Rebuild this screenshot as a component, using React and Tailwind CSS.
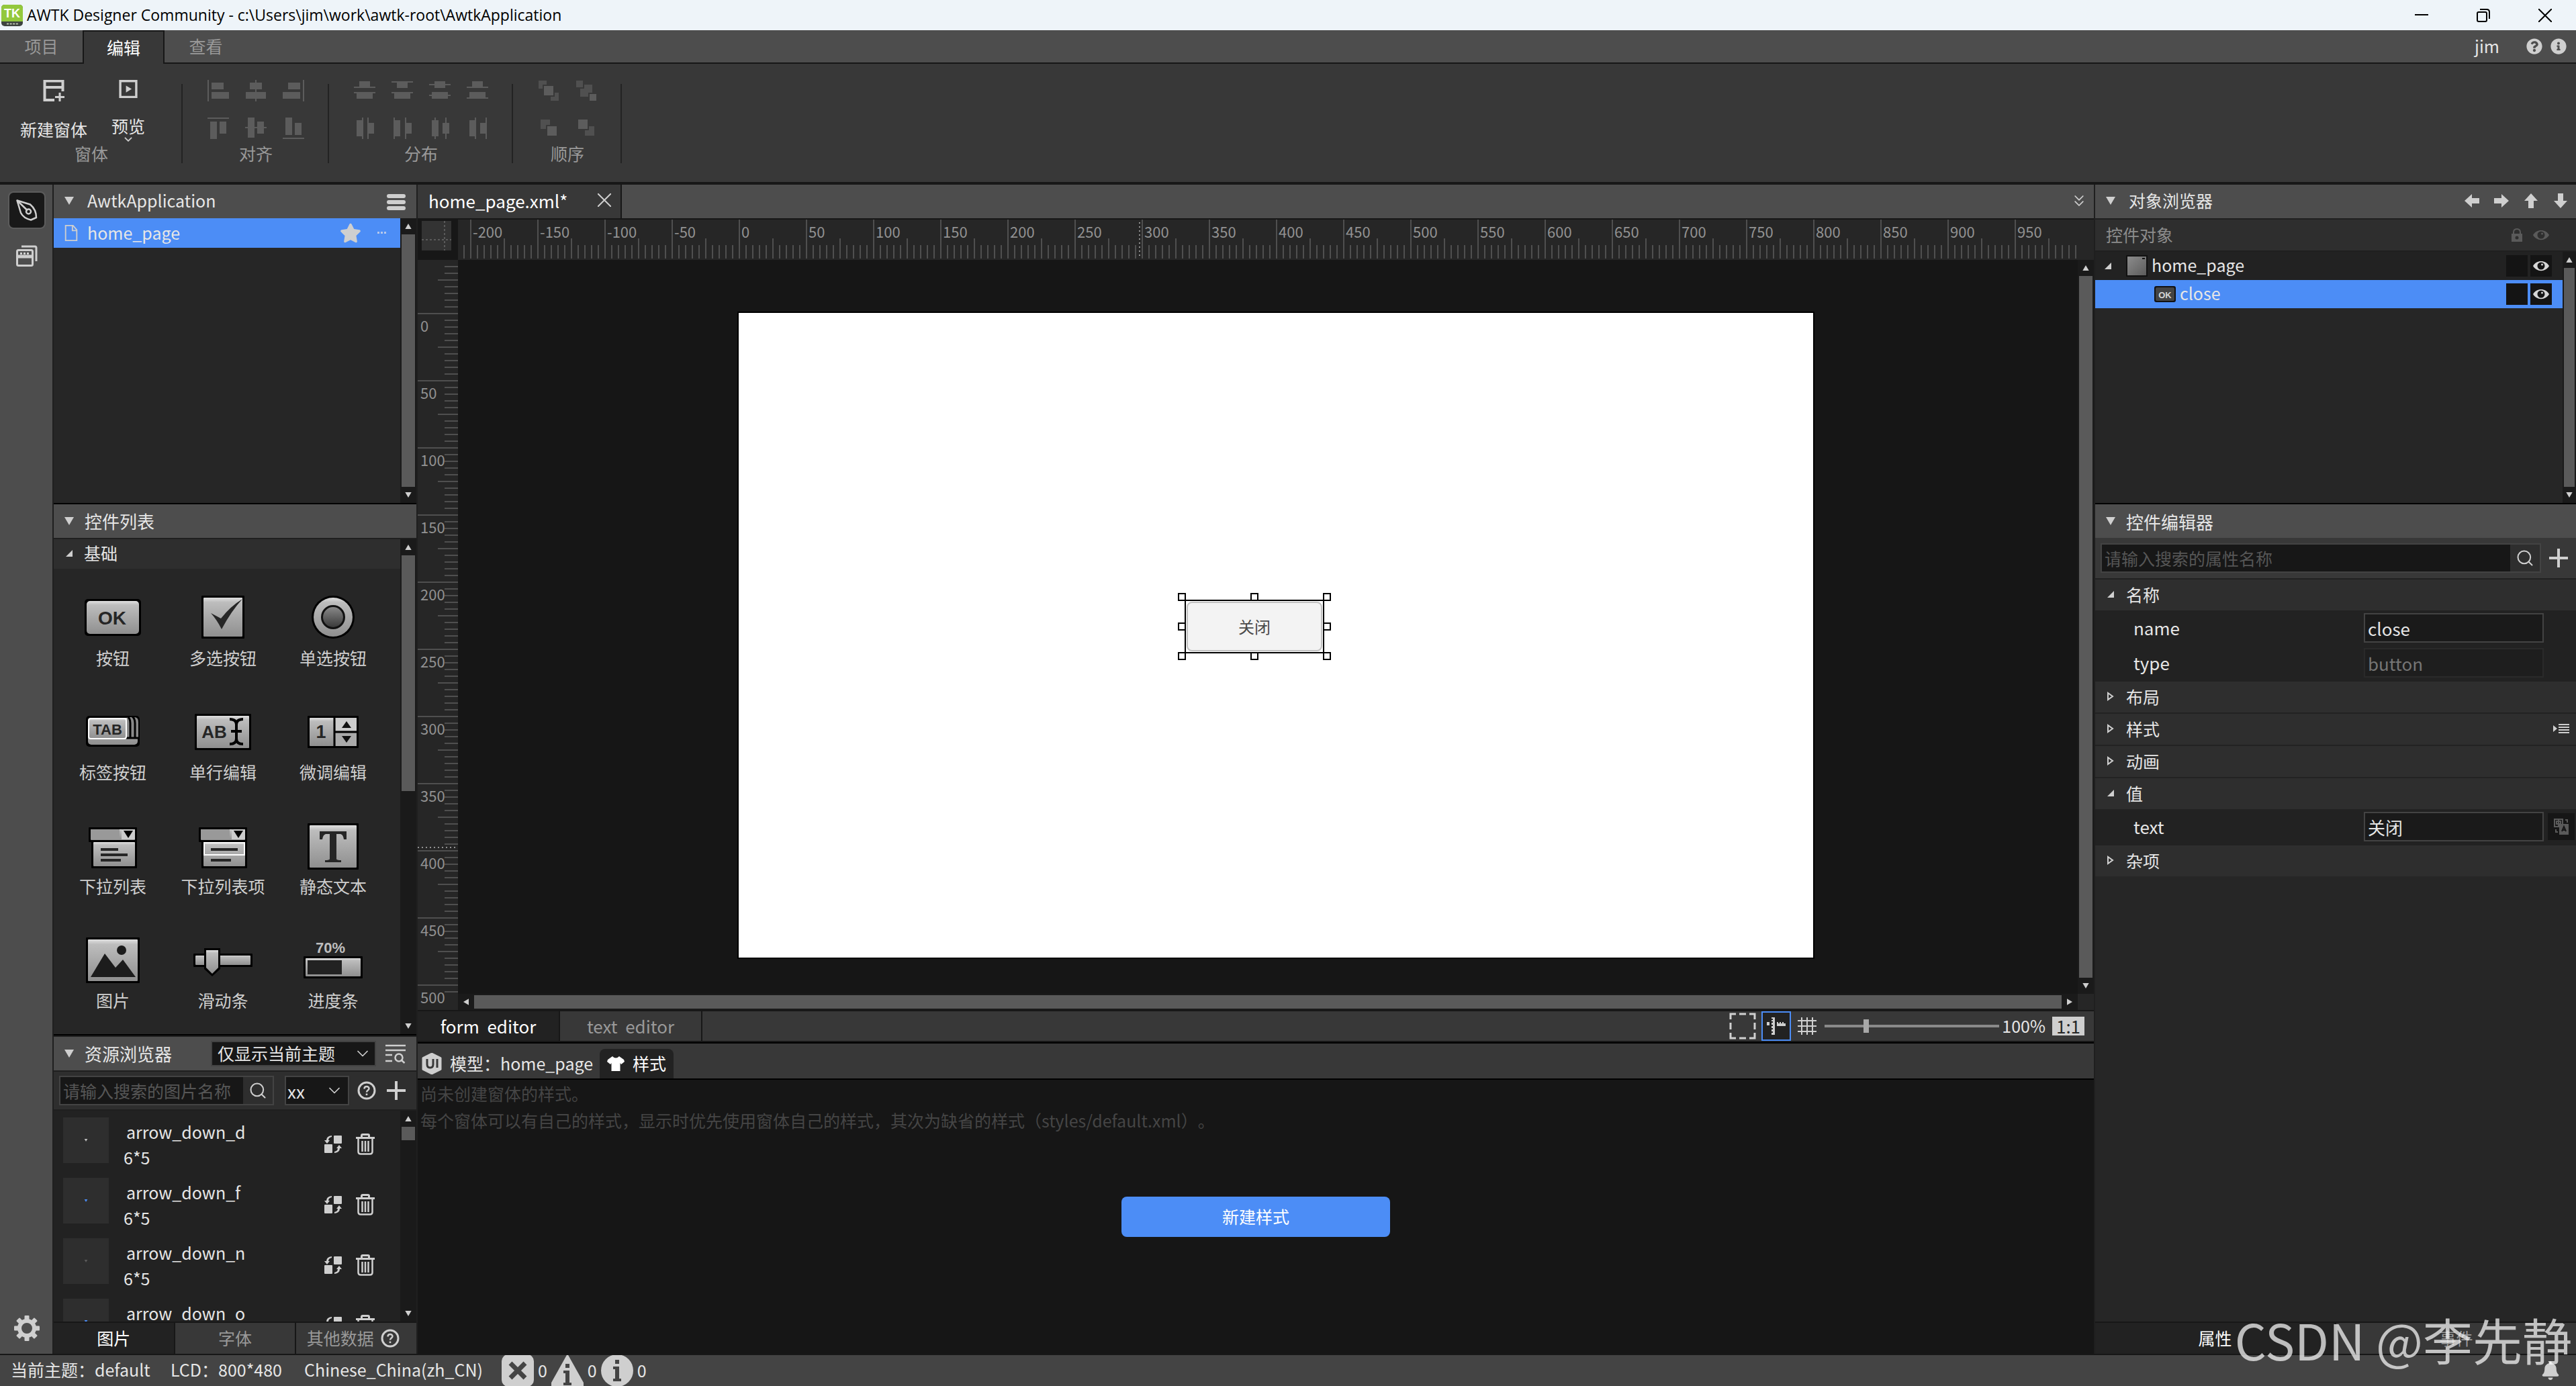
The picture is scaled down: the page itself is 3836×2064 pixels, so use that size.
import React, { useState } from 'react';
import { FaStar, FaBell, FaInfoCircle, FaQuestionCircle } from 'react-icons/fa';
import { Search, ChevronDown, ChevronsDown } from 'lucide-react';

const menuTabs = ['项目', '编辑', '查看'];

// every shape is [x, y, width, height] on a 32px grid
const alignIcons = [
  { label: '左对齐', shapes: [[0, 0, 2, 32], [6, 4, 18, 10], [6, 18, 26, 10]] },
  { label: '水平居中', shapes: [[15, 0, 2, 32], [7, 4, 18, 10], [1, 18, 30, 10]] },
  { label: '右对齐', shapes: [[30, 0, 2, 32], [8, 4, 18, 10], [0, 18, 26, 10]] },
  { label: '顶对齐', shapes: [[0, 0, 32, 2], [4, 6, 10, 26], [18, 6, 10, 18]] },
  { label: '垂直居中', shapes: [[0, 14, 32, 2], [4, 0, 10, 30], [18, 6, 10, 18]] },
  { label: '底对齐', shapes: [[0, 30, 32, 2], [4, 0, 10, 26], [18, 8, 10, 18]] },
];

const distributeIcons = [
  { label: '按底分布', shapes: [[8, 2, 16, 8], [0, 10, 32, 2], [0, 18, 32, 2], [4, 20, 24, 8]] },
  { label: '按顶分布', shapes: [[0, 2, 32, 2], [8, 4, 16, 8], [0, 18, 32, 2], [4, 20, 24, 8]] },
  { label: '垂直居中分布', shapes: [[8, 2, 16, 10], [0, 6, 32, 2], [4, 18, 24, 10], [0, 22, 32, 2]] },
  { label: '垂直分布', shapes: [[8, 2, 16, 8], [0, 10, 32, 2], [4, 18, 24, 8], [0, 26, 32, 2]] },
  { label: '按右分布', shapes: [[4, 4, 8, 24], [12, 0, 2, 32], [20, 0, 2, 32], [22, 8, 8, 16]] },
  { label: '按左分布', shapes: [[3, 0, 2, 32], [5, 4, 8, 24], [20, 0, 2, 32], [22, 8, 8, 16]] },
  { label: '水平居中分布', shapes: [[4, 4, 10, 24], [8, 0, 2, 32], [20, 8, 10, 16], [24, 0, 2, 32]] },
  { label: '水平分布', shapes: [[4, 4, 8, 24], [12, 0, 2, 32], [20, 8, 8, 16], [28, 0, 2, 32]] },
];

const orderIcons = [
  { label: '置顶', shapes: [[0, 0, 14, 14], [18, 18, 14, 14], [8, 8, 16, 16]] },
  { label: '置底', shapes: [[6, 6, 20, 20], [0, 0, 12, 12], [20, 20, 12, 12]] },
  { label: '上移', shapes: [[3, 2, 16, 16], [13, 12, 16, 16]] },
  { label: '下移', shapes: [[13, 12, 16, 16], [3, 2, 16, 16]] },
];

const resources = [
  { name: 'arrow_down_d', size: '6*5', color: 'text-[#bdbdbd]' },
  { name: 'arrow_down_f', size: '6*5', color: 'text-[#4c8df6]' },
  { name: 'arrow_down_n', size: '6*5', color: 'text-[#5a5a5a]' },
  { name: 'arrow_down_o', size: '6*5', color: 'text-[#4c8df6]' },
];

function Triangle({ className = '' }) {
  return (
    <svg viewBox="0 0 14 12" className={`shrink-0 ${className}`} fill="currentColor">
      <path d="M0 0H14L7 12Z" />
    </svg>
  );
}

function OpenMark() {
  return (
    <svg viewBox="0 0 10 10" className="w-2.5 h-2.5 shrink-0" fill="#cfcfcf">
      <path d="M10 0V10H0Z" />
    </svg>
  );
}

function ClosedMark() {
  return (
    <svg viewBox="0 0 10 14" className="w-2.5 h-3.5 shrink-0" fill="none" stroke="#cfcfcf" strokeWidth="2">
      <path d="M1 2V12L8 7Z" />
    </svg>
  );
}

function Plus() {
  return (
    <svg viewBox="0 0 28 28" className="w-7 h-7" fill="#cfcfcf">
      <path d="M12 0H16V12H28V16H16V28H12V16H0V12H12Z" />
    </svg>
  );
}

function Cross({ color }) {
  return (
    <svg viewBox="0 0 20 20" className="w-5 h-5" stroke={color} strokeWidth="2">
      <path d="M0 0L20 20M20 0L0 20" />
    </svg>
  );
}

function HelpRing() {
  return (
    <svg viewBox="0 0 28 28" className="w-7 h-7 shrink-0">
      <circle cx="14" cy="14" r="12" fill="none" stroke="#cfcfcf" strokeWidth="3" />
      <path d="M10.500 11.500C10.500 7 17.500 7 17.500 11C17.500 13.500 14 13.500 14 16.500" fill="none" stroke="#cfcfcf" strokeWidth="2.500" />
      <rect x="12.700" y="18.500" width="2.600" height="2.600" fill="#cfcfcf" />
    </svg>
  );
}

function Eye({ className }) {
  return (
    <svg viewBox="0 0 24 16" className={`w-6 h-4 ${className}`} fill="currentColor">
      <path fillRule="evenodd" d="M0 8C5 -1.500 19 -1.500 24 8C19 17.500 5 17.500 0 8ZM12 2.500A5.500 5.500 0 1 0 12 13.500A5.500 5.500 0 1 0 12 2.500Z" />
      <circle cx="13.500" cy="6" r="1.500" />
    </svg>
  );
}

function ArrowIcon({ className = '' }) {
  return (
    <svg viewBox="0 0 22 22" className={`w-[22px] h-[22px] ${className}`} fill="#cfcfcf">
      <path d="M0 11L11 1V7H22V15H11V21Z" />
    </svg>
  );
}

function VScroll({ className = '', thumb = 'flex-1' }) {
  return (
    <div className={`w-6 shrink-0 bg-[#1a1a1a] flex flex-col items-center ${className}`}>
      <div className="h-6 flex items-center">
        <Triangle className="w-2.5 h-2 text-[#cfcfcf] rotate-180" />
      </div>
      <div className="flex-1 min-h-0 self-stretch flex flex-col px-0.5">
        <div className={`bg-[#5a5a5a] ${thumb}`} />
      </div>
      <div className="h-6 flex items-center">
        <Triangle className="w-2.5 h-2 text-[#cfcfcf]" />
      </div>
    </div>
  );
}

function PanelHeader({ title, children, className = 'gap-4 text-[26px]' }) {
  return (
    <div className={`h-[50px] shrink-0 bg-[#4d4d4d] flex items-center px-4 ${className}`}>
      <Triangle className="w-3.5 h-3 text-[#cfcfcf]" />
      <h2 className="mr-auto whitespace-nowrap">{title}</h2>
      {children}
    </div>
  );
}

function TitleBar() {
  return (
    <header className="h-[45px] shrink-0 bg-[#eef4f9] text-black flex items-center pl-0.5">
      <svg viewBox="0 0 32 32" className="w-8 h-8 shrink-0">
        <rect width="32" height="32" rx="5" fill="#3d4340" />
        <path d="M0 5Q0 0 5 0H27Q32 0 32 5V25H0Z" fill="#93c83d" />
        <text x="16" y="19" textAnchor="middle" fontFamily="Liberation Sans" fontSize="18" fontWeight="bold" fill="#fff">TK</text>
        <path d="M8 28.500H25" stroke="#b9c4b0" strokeWidth="2" strokeDasharray="3 1.600" />
      </svg>
      <h1 className="ml-1.5 font-['Open_Sans','Noto_Sans',sans-serif] text-[23px] mr-auto whitespace-nowrap">
        AWTK Designer Community - c:\Users\jim\work\awtk-root\AwtkApplication
      </h1>
      <button aria-label="最小化" className="w-[92px] h-full flex items-center justify-center">
        <svg viewBox="0 0 20 20" className="w-5 h-5" stroke="#000" strokeWidth="2"><path d="M0 9H20" /></svg>
      </button>
      <button aria-label="还原" className="w-[92px] h-full flex items-center justify-center">
        <svg viewBox="0 0 20 20" className="w-5 h-5" stroke="#000" strokeWidth="2" fill="none">
          <rect x="1" y="5" width="14" height="14" rx="2" />
          <path d="M5 1H15Q19 1 19 5V15" />
        </svg>
      </button>
      <button aria-label="关闭窗口" className="w-[92px] h-full flex items-center justify-center">
        <Cross color="#000" />
      </button>
    </header>
  );
}

function MenuBar({ active, onChange }) {
  return (
    <nav className="h-[50px] shrink-0 bg-[#4d4d4d] flex items-stretch">
      {menuTabs.map((tab) => (
        <button
          key={tab}
          onClick={() => onChange(tab)}
          className={
            active === tab
              ? 'w-[122px] bg-[#383838] text-white border-2 border-b-0 border-[#171717]'
              : 'w-[123px] text-[#999999] border-b-2 border-[#171717]'
          }
        >
          {tab}
        </button>
      ))}
      <div className="flex-1 flex items-center justify-end border-b-2 border-[#171717] pr-3.5">
        <span className="mr-10">jim</span>
        <button aria-label="帮助" className="mr-3"><FaQuestionCircle className="w-6 h-6 text-[#cfcfcf]" /></button>
        <button aria-label="关于"><FaInfoCircle className="w-6 h-6 text-[#cfcfcf]" /></button>
      </div>
    </nav>
  );
}

function ShapeButton({ icon, stacked }) {
  return (
    <button disabled aria-label={icon.label} className="w-8 h-8">
      <svg viewBox="0 0 32 32" className="w-full h-full overflow-visible">
        {icon.shapes.map(([x, y, w, h], i) => (
          <rect
            key={i}
            x={x}
            y={y}
            width={w}
            height={h}
            fill={stacked && i < icon.shapes.length - 1 ? '#505050' : '#5c5c5c'}
            stroke={stacked ? '#383838' : 'none'}
            strokeWidth="2"
          />
        ))}
      </svg>
    </button>
  );
}

function RibbonGroup({ title, children, className }) {
  return (
    <section className={`relative flex flex-col items-center ${className}`}>
      <div className="h-[116px] flex pt-6">{children}</div>
      <div className="text-[#999999] leading-[34px]">{title}</div>
      <span className="absolute right-0 top-[30px] h-[118px] w-0.5 bg-[#232323]" />
    </section>
  );
}

function Ribbon() {
  return (
    <div className="h-[180px] shrink-0 bg-[#383838] border-b-4 border-[#171717] flex">
      <RibbonGroup title="窗体" className="w-[272px]">
        <button className="w-[124px] flex flex-col items-center justify-start">
          <svg viewBox="0 0 32 32" className="w-8 h-8" fill="none" stroke="#cfcfcf" strokeWidth="3">
            <path d="M17 30H2.500V1.500H29.500V17M2.500 11H29.500" strokeWidth="4" />
            <path d="M25 19V32M18 25.500H32" />
          </svg>
          <span className="mt-6 leading-[34px] whitespace-nowrap">新建窗体</span>
        </button>
        <button className="w-[98px] mr-3.5 flex flex-col items-center justify-start">
          <svg viewBox="0 0 32 32" className="w-8 h-8">
            <rect x="2" y="2" width="28" height="28" fill="none" stroke="#cfcfcf" strokeWidth="4" />
            <path d="M12 10L22 16L12 22Z" fill="#cfcfcf" />
          </svg>
          <span className="mt-6 leading-[34px]">预览</span>
          <svg viewBox="0 0 14 8" className="w-3.5 h-2" fill="none" stroke="#cfcfcf" strokeWidth="2">
            <path d="M1 1L7 7L13 1" />
          </svg>
        </button>
      </RibbonGroup>
      <RibbonGroup title="对齐" className="w-[218px]">
        <div className="grid grid-cols-3 gap-6 content-start">
          {alignIcons.map((icon) => <ShapeButton key={icon.label} icon={icon} />)}
        </div>
      </RibbonGroup>
      <RibbonGroup title="分布" className="w-[274px]">
        <div className="grid grid-cols-4 gap-6 content-start">
          {distributeIcons.map((icon) => <ShapeButton key={icon.label} icon={icon} />)}
        </div>
      </RibbonGroup>
      <RibbonGroup title="顺序" className="w-[162px]">
        <div className="grid grid-cols-2 gap-6 content-start">
          {orderIcons.map((icon) => <ShapeButton key={icon.label} icon={icon} stacked />)}
        </div>
      </RibbonGroup>
    </div>
  );
}

function ToolRail() {
  return (
    <aside className="w-20 shrink-0 bg-[#4d4d4d] border-r-2 border-[#1f1f1f] flex flex-col items-center pt-2.5 pb-[18px] pl-0.5">
      <button aria-label="设计" className="w-14 h-14 rounded-lg bg-[#191919] border-2 border-[#5c5c5c] flex items-center justify-center">
        <svg viewBox="0 0 32 32" className="w-8 h-8" fill="none" stroke="#cfcfcf" strokeWidth="2.500" strokeLinejoin="round">
          <path d="M1.500 1.500L21 7.500Q30 15 30 27L22 30.500Q11 28 7 20Z" />
          <path d="M1.500 1.500L17 16.500" />
          <circle cx="18.500" cy="18" r="3.500" />
        </svg>
      </button>
      <button aria-label="窗体列表" className="mt-6">
        <svg viewBox="0 0 32 32" className="w-8 h-8" fill="none" stroke="#cfcfcf" strokeWidth="3">
          <rect x="1.500" y="7.500" width="23" height="23" rx="2" />
          <path d="M2 17H24" strokeWidth="5" />
          <path d="M6 12.500H20" strokeDasharray="3 2" />
          <path d="M8 2H28Q30 2 30 4V24" />
        </svg>
      </button>
      <button aria-label="设置" className="mt-auto">
        <svg viewBox="0 0 40 40" className="w-10 h-10" fill="#cfcfcf">
          {[0, 45, 90, 135, 180, 225, 270, 315].map((deg) => (
            <rect key={deg} x="16.500" y="1" width="7" height="9" rx="1" transform={`rotate(${deg} 20 20)`} />
          ))}
          <circle cx="20" cy="20" r="11" fill="none" stroke="#cfcfcf" strokeWidth="6" />
        </svg>
      </button>
    </aside>
  );
}

function ProjectPanel() {
  return (
    <section className="flex-[3] min-h-0 flex flex-col border-b-2 border-black">
      <PanelHeader title="AwtkApplication" className="gap-5 pb-0.5">
        <button aria-label="菜单" className="flex flex-col gap-[3px] pt-1">
          <span className="w-7 h-1.5 rounded-full bg-[#cfcfcf]" />
          <span className="w-7 h-1.5 rounded-full bg-[#cfcfcf]" />
          <span className="w-7 h-1.5 rounded-full bg-[#cfcfcf]" />
        </button>
      </PanelHeader>
      <div className="flex-1 min-h-0 flex bg-[#262626]">
        <ul className="flex-1">
          <li className="h-11 bg-[#4c8df6] flex items-center pl-4 pr-5">
            <svg viewBox="0 0 20 26" className="w-5 h-6" fill="none" stroke="#cfcfcf" strokeWidth="2">
              <path d="M1 1H13L19 8V25H1Z" />
              <path d="M12 1V9H19" />
            </svg>
            <span className="ml-3.5 mr-auto">home_page</span>
            <FaStar className="w-8 h-8 text-[#cfcfcf]" />
            <svg viewBox="0 0 14 4" className="w-3.5 h-1 ml-6" fill="#b5c8ec">
              <path d="M0 0H3V3H0ZM5 0H8V3H5ZM10 0H13V3H10Z" />
            </svg>
          </li>
        </ul>
        <VScroll />
      </div>
    </section>
  );
}

function Plate({ x, y, w, h, r = 1 }) {
  return (
    <>
      <rect x={x} y={y} width={w} height={h} rx={r} fill="#000" />
      <rect x={x + 3} y={y + 3} width={w - 6} height={h - 6} rx={r} fill="url(#plate)" />
    </>
  );
}

function IconText({ x, y, size, fill = '#262626', children }) {
  return (
    <text x={x} y={y} textAnchor="middle" fontFamily="Liberation Sans" fontWeight="bold" fontSize={size} fill={fill}>
      {children}
    </text>
  );
}

const widgets = [
  {
    name: '按钮',
    icon: (
      <>
        <Plate x={3} y={9} w={84} h={55} r={5} />
        <IconText x={44} y={47} size={28}>OK</IconText>
      </>
    ),
  },
  {
    name: '多选按钮',
    icon: (
      <>
        <Plate x={13} y={4} w={64} h={64} />
        <path d="M27 30L42 38Q56 20 74 9Q58 26 43 54Q36 40 27 30Z" fill="#262626" />
      </>
    ),
  },
  {
    name: '单选按钮',
    icon: (
      <>
        <circle cx="45" cy="36" r="32" fill="#000" />
        <circle cx="45" cy="36" r="29" fill="url(#plate)" />
        <circle cx="45" cy="36" r="18" fill="#111" />
        <circle cx="45" cy="36" r="15" fill="url(#knob)" />
      </>
    ),
  },
  {
    name: '标签按钮',
    icon: (
      <>
        <Plate x={5} y={13} w={80} h={46} r={5} />
        <path d="M66 15H77Q83 15 83 22V45H66Z" fill="#8a8a8a" />
        <path d="M67 14Q71 17 71 24V46M74 14Q78 17 78 24V46M65 46H84" fill="none" stroke="#000" strokeWidth="3" />
        <rect x="9" y="17" width="56" height="30" rx="3" fill="url(#plate)" stroke="#fff" strokeWidth="2" />
        <IconText x={37} y={41} size={22}>TAB</IconText>
      </>
    ),
  },
  {
    name: '单行编辑',
    icon: (
      <>
        <Plate x={3} y={10} w={84} h={54} />
        <IconText x={32} y={46} size={26}>AB</IconText>
        <path d="M55 18Q65 18 65 26V47Q65 55 55 55M75 18Q65 18 65 26M65 47Q65 55 75 55M57 36H73" fill="none" stroke="#000" strokeWidth="4" />
      </>
    ),
  },
  {
    name: '微调编辑',
    icon: (
      <>
        <Plate x={7} y={13} w={76} h={48} />
        <path d="M47 14V60M47 37H82" stroke="#000" strokeWidth="3" />
        <rect x="49" y="16" width="31" height="19" fill="#ccc" />
        <rect x="49" y="39" width="31" height="19" fill="#aaa" />
        <path d="M58 31L65 21L72 31ZM58 43L65 53L72 43Z" fill="#111" />
        <IconText x={27} y={46} size={27}>1</IconText>
      </>
    ),
  },
  {
    name: '下拉列表',
    icon: (
      <>
        <Plate x={9} y={9} w={72} h={22} />
        <Plate x={13} y={28} w={68} h={42} />
        <rect x="12" y="12" width="43" height="15" fill="#999" />
        <rect x="58" y="12" width="20" height="15" fill="#ccc" />
        <path d="M61 14H75L68 25Z" fill="#000" />
        <path d="M27 42H53M27 50H67M27 58H57" stroke="#262626" strokeWidth="4" />
      </>
    ),
  },
  {
    name: '下拉列表项',
    icon: (
      <>
        <Plate x={9} y={9} w={72} h={22} />
        <Plate x={13} y={28} w={68} h={42} />
        <rect x="12" y="12" width="43" height="15" fill="#999" />
        <rect x="58" y="12" width="20" height="15" fill="#ccc" />
        <path d="M61 14H75L68 25Z" fill="#000" />
        <rect x="17" y="32" width="60" height="18" fill="none" stroke="#fff" strokeWidth="2" />
        <path d="M27 42H67M27 58H57" stroke="#262626" strokeWidth="4" />
      </>
    ),
  },
  {
    name: '静态文本',
    icon: (
      <>
        <Plate x={7} y={3} w={76} h={69} />
        <path d="M25 15H65V27H61Q60 20 56 19H50V56Q50 58 57 58V61H33V58Q40 58 40 56V19H34Q30 20 29 27H25Z" fill="#262626" />
      </>
    ),
  },
  {
    name: '图片',
    icon: (
      <>
        <Plate x={5} y={3} w={80} h={68} />
        <path d="M12 62L33 27L49 48L60 36L79 62Z" fill="#1c1c1c" />
        <circle cx="58" cy="22" r="7" fill="#1c1c1c" />
      </>
    ),
  },
  {
    name: '滑动条',
    icon: (
      <>
        <Plate x={1} y={27} w={88} h={20} />
        <path d="M17 19H41V50L29 61L17 50Z" fill="#000" />
        <path d="M20 22H38V48L29 57L20 48Z" fill="url(#plate)" />
      </>
    ),
  },
  {
    name: '进度条',
    icon: (
      <>
        <IconText x={41} y={26} size={22} fill="#bdbdbd">70%</IconText>
        <Plate x={1} y={31} w={88} h={33} />
        <rect x="7" y="37" width="51" height="21" fill="#222" />
      </>
    ),
  },
];

function WidgetPanel() {
  return (
    <section className="flex-[5] min-h-0 flex flex-col border-b-2 border-black">
      <PanelHeader title="控件列表" />
      <div className="flex-1 min-h-0 flex bg-[#262626] border-t-2 border-[#1f1f1f]">
        <div className="flex-1 overflow-hidden">
          <h3 className="h-11 bg-[#2e2e2e] flex items-center gap-[17px] px-[18px] pb-0.5">
            <OpenMark />
            基础
          </h3>
          <div className="grid grid-cols-3 pl-1.5 pr-[18px]">
            {widgets.map((widget) => (
              <button key={widget.name} className="h-[170px] pt-9 flex flex-col items-center justify-start">
                <svg viewBox="0 0 90 72" className="w-[90px] h-[72px]">{widget.icon}</svg>
                <span className="mt-1.5 leading-9 whitespace-nowrap text-[#cfcfcf]">{widget.name}</span>
              </button>
            ))}
          </div>
        </div>
        <VScroll thumb="h-[51%]" />
      </div>
    </section>
  );
}

function ResourceRow({ item }) {
  return (
    <li className="h-[90px] flex items-start pl-3.5 pt-2.5">
      <div className="w-[68px] h-[68px] bg-[#2e2e2e] flex items-center justify-center">
        <Triangle className={`w-1.5 h-1 ${item.color}`} />
      </div>
      <div className="ml-[22px] mr-auto mt-0.5 leading-[38px]">
        <div className="pl-1">{item.name}</div>
        <div>{item.size}</div>
      </div>
      <button aria-label={`替换 ${item.name}`} className="mt-[26px]">
        <svg viewBox="0 0 28 28" className="w-7 h-7" fill="#cfcfcf">
          <rect x="15" y="1" width="12" height="12" rx="1" />
          <rect x="1" y="14" width="12" height="13" rx="1" />
          <path d="M12 1Q4 2 4 8H1L5 13L9 8H7Q7 4 12 3ZM16 27Q24 26 24 20H27L23 15L19 20H21Q21 24 16 25Z" />
        </svg>
      </button>
      <button aria-label={`删除 ${item.name}`} className="mt-6 ml-5 mr-[38px]">
        <svg viewBox="0 0 28 32" className="w-7 h-8" fill="none" stroke="#cfcfcf" strokeWidth="3">
          <path d="M0 6.500H28M8.500 6V3Q8.500 1.500 10 1.500H18Q19.500 1.500 19.500 3V6" />
          <path d="M3.500 7V27Q3.500 30.500 7 30.500H21Q24.500 30.500 24.500 27V7M9.500 11V27M14 11V27M18.500 11V27" strokeWidth="2.500" />
        </svg>
      </button>
    </li>
  );
}

function ResourcePanel() {
  const [keyword, setKeyword] = useState('');

  return (
    <section className="flex-[3] min-h-0 flex flex-col">
      <div className="h-[50px] shrink-0 bg-[#4d4d4d] flex items-center pl-4 pr-4 mt-0.5">
        <Triangle className="w-3.5 h-3 text-[#cfcfcf]" />
        <h2 className="ml-4 mr-auto text-[26px] pb-0.5">资源浏览器</h2>
        <div className="grid items-center w-[246px]">
          <select aria-label="主题过滤" className="[grid-area:1/1] h-[38px] w-full appearance-none bg-[#171717] border-2 border-[#434343] pl-2 pb-0.5 leading-8">
            <option>仅显示当前主题</option>
          </select>
          <ChevronDown className="[grid-area:1/1] w-7 h-7 justify-self-end mr-1.5 pointer-events-none text-[#cfcfcf]" strokeWidth={1.5} />
        </div>
        <button aria-label="筛选" className="ml-3.5">
          <svg viewBox="0 0 30 30" className="w-[30px] h-[30px]" fill="none" stroke="#cfcfcf" strokeWidth="2.500">
            <path d="M0 3H30M0 10H30M0 17H10M0 26H10" />
            <circle cx="20" cy="21" r="5.500" />
            <path d="M24 25L28.500 29" />
          </svg>
        </button>
      </div>
      <div className="h-[60px] shrink-0 bg-[#2e2e2e] border-y-2 border-[#1f1f1f] flex items-center pl-2 pr-4">
        <div className="flex h-11 w-80 border-2 border-[#434343]">
          <input
            aria-label="搜索图片"
            value={keyword}
            onChange={(e) => setKeyword(e.target.value)}
            placeholder="请输入搜索的图片名称"
            className="flex-1 min-w-0 bg-[#171717] pl-1 outline-none placeholder:text-[#565656]"
          />
          <button aria-label="搜索" className="w-11 flex items-center justify-center">
            <Search className="w-7 h-7 text-[#cfcfcf]" strokeWidth={1.75} />
          </button>
        </div>
        <div className="grid items-center w-24 ml-4">
          <select aria-label="倍率" className="[grid-area:1/1] h-11 w-full appearance-none bg-[#171717] border-2 border-[#434343] pl-0.5 text-[26px]">
            <option>xx</option>
          </select>
          <ChevronDown className="[grid-area:1/1] w-7 h-7 justify-self-end mr-2 pointer-events-none text-[#cfcfcf]" strokeWidth={1.5} />
        </div>
        <button aria-label="帮助" className="ml-auto mr-4"><HelpRing /></button>
        <button aria-label="添加图片"><Plus /></button>
      </div>
      <div className="flex-1 min-h-0 flex bg-[#222222]">
        <ul className="flex-1 overflow-hidden">
          {resources.map((item) => <ResourceRow key={item.name} item={item} />)}
        </ul>
        <VScroll thumb="h-5" />
      </div>
      <div className="h-12 shrink-0 border-t-2 border-[#171717] grid grid-cols-3 gap-0.5 bg-[#171717]">
        <button className="bg-[#222222] text-white">图片</button>
        <button className="bg-[#383838] text-[#999999]">字体</button>
        <button className="bg-[#383838] text-[#999999] flex items-center justify-center gap-2.5 pr-2.5">
          其他数据
          <HelpRing />
        </button>
      </div>
    </section>
  );
}

function range(from, to, step) {
  const list = [];
  for (let v = from; v <= to; v += step) list.push(v);
  return list;
}

// 1 design unit = 2px
function HRuler() {
  return (
    <svg className="flex-1 min-w-0 h-[60px] bg-[#262626]">
      {range(-205, 995, 5).map((v) => {
        const top = v % 50 === 0 ? 0 : v % 25 === 0 ? 28 : 38;
        return <rect key={v} x={418 + v * 2} y={top} width="2" height={58 - top} fill="#4f4f4f" />;
      })}
      {range(-200, 950, 50).map((v) => (
        <text key={v} x={422 + v * 2} y="27" fontSize="22" fill="#929292">{v}</text>
      ))}
      <path d="M1015 4V56" stroke="#929292" strokeWidth="2" strokeDasharray="2 4" />
    </svg>
  );
}

function VRuler() {
  return (
    <svg className="w-[60px] h-full shrink-0 bg-[#262626]">
      {range(-35, 505, 5).map((v) => {
        const left = v % 50 === 0 ? 0 : v % 25 === 0 ? 30 : 40;
        return <rect key={v} x={left} y={79 + v * 2} width={60 - left} height="2" fill="#4f4f4f" />;
      })}
      {range(0, 500, 50).map((v) => (
        <text key={v} x="4" y={107 + v * 2} fontSize="22" fill="#929292">{v}</text>
      ))}
      <path d="M0 875H56" stroke="#929292" strokeWidth="2" strokeDasharray="2 4" />
    </svg>
  );
}

const handles = [
  'left-[-12px] top-[-12px]',
  'left-[96px] top-[-12px]',
  'right-[-12px] top-[-12px]',
  'left-[-12px] top-[32px]',
  'right-[-12px] top-[32px]',
  'left-[-12px] bottom-[-12px]',
  'left-[96px] bottom-[-12px]',
  'right-[-12px] bottom-[-12px]',
];

function Stage() {
  return (
    <div className="flex-1 min-w-0 relative overflow-hidden bg-[#161616]">
      <div className="absolute left-[418px] top-[79px] w-[1600px] h-[960px] bg-white outline-2 outline-black">
        <div className="absolute left-[664px] top-[427px] w-[208px] h-20 border-2 border-black p-px">
          <button className="w-full h-full rounded-lg border-2 border-[#c2c2c2] bg-[#f3f3f3] text-[#4a4a4a] text-[24px]">
            关闭
          </button>
          {handles.map((pos) => (
            <span key={pos} className={`absolute w-3 h-3 border-2 border-black bg-white ${pos}`} />
          ))}
        </div>
      </div>
    </div>
  );
}

function FormEditor() {
  const [zoom, setZoom] = useState(23);

  return (
    <section className="flex-1 min-h-0 flex flex-col">
      <div className="h-[52px] shrink-0 flex bg-[#4d4d4d] border-b-2 border-[#171717]">
        <div className="w-[304px] bg-[#383838] border-r-2 border-[#171717] flex items-center justify-between pl-4 pr-3.5 pb-1 text-white text-[26px]">
          home_page.xml*
          <button aria-label="关闭标签"><Cross color="#cfcfcf" /></button>
        </div>
        <button aria-label="更多标签" className="ml-auto mr-2 pb-0.5">
          <ChevronsDown className="w-7 h-7 text-[#cfcfcf]" strokeWidth={1.5} />
        </button>
      </div>
      <div className="flex shrink-0">
        <div className="w-[60px] h-[60px] bg-[#171717] flex items-center justify-center pr-1 pb-3">
          <svg viewBox="0 0 44 44" className="w-11 h-11 bg-[#333333]" stroke="#5a5a5a" strokeWidth="2" strokeDasharray="3 3">
            <path d="M34 0V44M0 28H44" />
          </svg>
        </div>
        <HRuler />
      </div>
      <div className="flex-1 min-h-0 flex">
        <VRuler />
        <div className="flex-1 min-w-0 flex flex-col">
          <div className="flex-1 min-h-0 flex">
            <Stage />
            <VScroll />
          </div>
          <div className="h-6 shrink-0 flex bg-[#1a1a1a]">
            <div className="w-6 flex items-center justify-center">
              <Triangle className="w-3 h-2 text-[#cfcfcf] rotate-90" />
            </div>
            <div className="flex-1 my-0.5 bg-[#5a5a5a]" />
            <div className="w-6 flex items-center justify-center">
              <Triangle className="w-3 h-2 text-[#cfcfcf] -rotate-90" />
            </div>
            <div className="w-6 bg-[#262626]" />
          </div>
        </div>
      </div>
      <div className="h-12 shrink-0 flex items-stretch bg-[#383838] border-y-2 border-[#171717] text-[26px]">
        <button className="w-[212px] pb-0.5 bg-[#222222] text-white whitespace-pre border-r-2 border-[#171717]">form  editor</button>
        <button className="w-[212px] pb-0.5 text-[#999999] whitespace-pre border-r-2 border-[#171717]">text  editor</button>
        <div className="ml-auto mr-3.5 flex items-center">
          <button aria-label="选择区域">
            <svg viewBox="0 0 40 40" className="w-10 h-10" fill="none" stroke="#cfcfcf" strokeWidth="3">
              <path d="M2 10V2H10M30 2H38V10M38 30V38H30M10 38H2V30M15 2H25M15 38H25M2 15V25M38 15V25" />
            </svg>
          </button>
          <button aria-label="标尺" className="w-11 h-11 ml-2 border-2 border-[#4c8df6] bg-[#222222] flex items-center justify-center">
            <svg viewBox="0 0 28 28" className="w-7 h-7" fill="#cfcfcf">
              <path d="M7 1H12V27H7V24H9V22H7V19H9V17H7V14H9V12H7V9H9V7H7V5H9V3H7Z" />
              <path d="M0 8H4V13H0ZM15 8H17V10H19V8H21V10H23V8H25V10H28V14H15Z" />
            </svg>
          </button>
          <button aria-label="网格" className="ml-2.5">
            <svg viewBox="0 0 28 28" className="w-7 h-7" stroke="#cfcfcf" strokeWidth="2">
              <path d="M6 1V27M14 1V27M22 1V27M0 6H28M0 14H28M0 22H28" />
            </svg>
          </button>
          <input
            type="range"
            aria-label="缩放"
            value={zoom}
            onChange={(e) => setZoom(Number(e.target.value))}
            className="ml-3 w-[260px] h-1 appearance-none bg-[#8a8a8a] [&::-webkit-slider-thumb]:appearance-none [&::-webkit-slider-thumb]:w-2 [&::-webkit-slider-thumb]:h-5 [&::-webkit-slider-thumb]:bg-[#a8a8a8]"
          />
          <span className="ml-1 text-[25px]">100%</span>
          <button className="ml-2.5 w-12 h-7 bg-[#cfcfcf] text-[#262626] leading-7 text-center">1:1</button>
        </div>
      </div>
    </section>
  );
}

function StylePanel() {
  return (
    <section className="h-[464px] shrink-0 flex flex-col border-t-2 border-black bg-[#161616]">
      <div className="h-[54px] shrink-0 flex items-center bg-[#383838] border-b-2 border-black pl-1.5">
        <svg viewBox="0 0 30 32" className="w-[30px] h-8 mt-2">
          <path d="M15 0L29 7V25L15 32L1 25V7Z" fill="#cfcfcf" stroke="#cfcfcf" strokeLinejoin="round" />
          <path d="M8 9V17Q8 22 12.500 22Q17 22 17 17V9M23 9V22" fill="none" stroke="#383838" strokeWidth="3" />
        </svg>
        <span className="ml-3 mt-2">模型：home_page</span>
        <button className="ml-2.5 w-[110px] self-end h-11 rounded-t-lg bg-[#222222] text-white flex items-center justify-center gap-3">
          <svg viewBox="0 0 26 22" className="w-[26px] h-[22px]" fill="#fff">
            <path d="M8 0Q13 5 18 0L25 5L26 8L21 12L19.500 10V22H6.500V10L5 12L0 8L1 5Z" />
          </svg>
          样式
        </button>
      </div>
      <div className="pl-1 text-[#454545] leading-[40px]">
        <p>尚未创建窗体的样式。</p>
        <p>每个窗体可以有自己的样式，显示时优先使用窗体自己的样式，其次为缺省的样式（styles/default.xml）。</p>
      </div>
      <button className="mt-[94px] mx-auto w-[400px] h-[60px] rounded-lg bg-[#4c8df6] text-white">新建样式</button>
    </section>
  );
}

function ObjectRow({ selected, children }) {
  return (
    <li className={`h-[42px] flex items-center ${selected ? 'bg-[#4c8df6]' : 'bg-[#222222]'}`}>
      {children}
      <button aria-label="锁定" className="w-8 h-8 ml-auto bg-[#141414]" />
      <button aria-label="可见" className="w-8 h-8 ml-1 mr-4 bg-[#141414] flex items-center justify-center">
        <Eye className="text-[#d6d6d6]" />
      </button>
    </li>
  );
}

function ObjectPanel() {
  return (
    <section className="flex-[3] min-h-0 flex flex-col border-b-2 border-black">
      <div className="h-[52px] shrink-0 bg-[#4d4d4d] border-b-2 border-[#1f1f1f] flex items-center pl-4 pr-3 pb-0.5 gap-[22px]">
        <Triangle className="w-3.5 h-3 text-[#cfcfcf]" />
        <h2 className="mr-auto -ml-0.5">对象浏览器</h2>
        <button aria-label="左移"><ArrowIcon /></button>
        <button aria-label="右移"><ArrowIcon className="rotate-180" /></button>
        <button aria-label="上移"><ArrowIcon className="rotate-90" /></button>
        <button aria-label="下移"><ArrowIcon className="-rotate-90" /></button>
      </div>
      <div className="h-12 shrink-0 bg-[#2e2e2e] border-b-2 border-[#1f1f1f] flex items-center pl-4 text-[#8c8c8c]">
        <span className="mr-auto">控件对象</span>
        <svg viewBox="0 0 16 20" className="w-4 h-5 mr-4" fill="#5a5a5a">
          <path fillRule="evenodd" d="M0 8H16V20H0ZM8 11.500A2.500 2.500 0 1 0 8 16.500A2.500 2.500 0 1 0 8 11.500Z" />
          <path d="M3 9V6Q3 1 8 1Q13 1 13 6V9" fill="none" stroke="#5a5a5a" strokeWidth="2" />
        </svg>
        <Eye className="mr-10 text-[#5a5a5a]" />
      </div>
      <div className="flex-1 min-h-0 flex bg-[#262626]">
        <ul className="flex-1">
          <ObjectRow>
            <span className="ml-3.5"><OpenMark /></span>
            <svg viewBox="0 0 32 32" className="w-8 h-8 ml-[22px] mr-1.5">
              <rect width="32" height="32" fill="#111" />
              <rect x="2" y="2" width="28" height="28" fill="url(#pane)" />
              <rect x="24" y="4" width="4" height="2" fill="#111" />
            </svg>
            <span className="pb-0.5">home_page</span>
          </ObjectRow>
          <ObjectRow selected>
            <svg viewBox="0 0 32 24" className="w-8 h-6 ml-[88px] mr-1.5">
              <rect width="32" height="24" rx="3" fill="#111" />
              <rect x="2" y="2" width="28" height="20" rx="2" fill="#444" />
              <text x="16" y="18" textAnchor="middle" fontFamily="Liberation Sans" fontSize="13" fontWeight="bold" fill="#d6d6d6">OK</text>
            </svg>
            <span className="pb-0.5">close</span>
          </ObjectRow>
        </ul>
        <VScroll className="!w-5" />
      </div>
    </section>
  );
}

function Section({ title, open, children, action }) {
  return (
    <div>
      <h3 className="h-12 bg-[#2e2e2e] border-t-2 border-[#222222] flex items-center pl-[18px] pr-2.5 pb-0.5">
        {open ? <OpenMark /> : <ClosedMark />}
        <span className="ml-[18px] mr-auto">{title}</span>
        {action}
      </h3>
      {children && <div className="bg-[#222222]">{children}</div>}
    </div>
  );
}

function Field({ id, value, disabled, children }) {
  return (
    <div className="h-[52px] flex items-center text-[26px]">
      <label htmlFor={id} className="w-[400px] pl-[57px] pb-0.5">{id}</label>
      <input
        id={id}
        defaultValue={value}
        disabled={disabled}
        className={`flex-1 min-w-0 h-11 bg-[#1a1a1a] border-2 border-[#434343] pl-1 text-[#e6e6e6] disabled:bg-[#1e1e1e] disabled:border-[#2a2a2a] disabled:text-[#757575] ${children ? 'mr-1.5' : 'mr-12'}`}
      />
      {children}
    </div>
  );
}

function PropertyPanel() {
  return (
    <section className="flex-[8] min-h-0 flex flex-col bg-[#262626]">
      <PanelHeader title="控件编辑器" />
      <div className="h-[60px] shrink-0 bg-[#383838] flex items-center pl-2 pr-3">
        <div className="flex-1 h-11 flex border-2 border-[#434343]">
          <input
            aria-label="搜索属性"
            placeholder="请输入搜索的属性名称"
            className="flex-1 min-w-0 bg-[#171717] pl-1 outline-none placeholder:text-[#565656]"
          />
          <button aria-label="搜索" className="w-11 bg-[#2e2e2e] flex items-center justify-center">
            <Search className="w-7 h-7 text-[#cfcfcf]" strokeWidth={1.75} />
          </button>
        </div>
        <button aria-label="添加属性" className="ml-3"><Plus /></button>
      </div>
      <Section title="名称" open>
        <Field id="name" value="close" />
        <Field id="type" value="button" disabled />
      </Section>
      <Section title="布局" />
      <Section
        title="样式"
        action={
          <button aria-label="样式菜单">
            <svg viewBox="0 0 24 14" className="w-6 h-3.5" fill="#cfcfcf">
              <path d="M0 2L6 7L0 12ZM8 0H24V2H8ZM8 4H24V6H8ZM8 8H24V10H8ZM8 12H24V14H8Z" />
            </svg>
          </button>
        }
      />
      <Section title="动画" />
      <Section title="值" open>
        <Field id="text" value="关闭">
          <button aria-label="翻译" className="w-10 h-10 mr-0.5 bg-[#161616] flex items-center justify-center">
            <svg viewBox="0 0 22 24" className="w-[22px] h-6" fill="none" stroke="#5a5a5a" strokeWidth="2">
              <path d="M1 1H13V12H1ZM4 4H10V8H4ZM7 2V11M17 2H20V6M3 16V20H6" />
              <path d="M9 9H21V23H9Z" fill="#5a5a5a" />
              <path d="M12 19L15 12L18 19M13 17H17" stroke="#161616" />
            </svg>
          </button>
        </Field>
      </Section>
      <Section title="杂项" />
      <div className="mt-auto h-12 shrink-0 border-t-2 border-[#171717] grid grid-cols-2 gap-0.5 bg-[#171717]">
        <button className="bg-[#222222] text-white">属性</button>
        <button className="bg-[#383838] text-[#999999]">事件</button>
      </div>
    </section>
  );
}

function StatusBar() {
  return (
    <footer className="h-12 shrink-0 overflow-hidden bg-[#444444] border-t-2 border-[#171717] flex items-center pl-4 pr-6 whitespace-nowrap">
      <span className="w-[238px] pb-0.5">当前主题：default</span>
      <span className="w-[199px] pb-0.5">LCD：800*480</span>
      <span className="pb-0.5">Chinese_China(zh_CN)</span>
      <span className="ml-7 flex items-center gap-1.5">
        <svg viewBox="0 0 48 48" className="w-12 h-12">
          <rect width="48" height="48" rx="10" fill="#cfcfcf" />
          <path d="M13 13L35 35M35 13L13 35" stroke="#444444" strokeWidth="7" />
        </svg>
        0
      </span>
      <span className="ml-1.5 flex items-center gap-1.5">
        <svg viewBox="0 0 48 48" className="w-12 h-12">
          <path d="M24 -1L48 42V48H0V42Z" fill="#cfcfcf" />
          <path d="M21 14H27V20H21ZM18 24H27V42H30V46H18V42H21V28H18Z" fill="#444444" />
        </svg>
        0
      </span>
      <span className="ml-1.5 flex items-center gap-1.5">
        <svg viewBox="0 0 48 48" className="w-12 h-12">
          <circle cx="24" cy="24" r="24" fill="#cfcfcf" />
          <path d="M21 8H27V14H21ZM18 18H27V36H30V40H18V36H21V22H18Z" fill="#444444" />
        </svg>
        0
      </span>
      <button aria-label="通知" className="ml-auto"><FaBell className="w-7 h-7 text-[#cfcfcf]" /></button>
    </footer>
  );
}

function App() {
  const [menu, setMenu] = useState('编辑');

  return (
    <div className="h-screen flex flex-col overflow-hidden bg-[#1f1f1f] text-[#e6e6e6] text-[25px] font-['Noto_Sans_CJK_SC',sans-serif] [text-spacing-trim:space-all]">
      <svg className="absolute w-0 h-0" aria-hidden="true">
        <defs>
          <linearGradient id="plate" x1="0" y1="0" x2="0" y2="1">
            <stop offset="0" stopColor="#e0e0e0" />
            <stop offset="0.12" stopColor="#bdbdbd" />
            <stop offset="1" stopColor="#8f8f8f" />
          </linearGradient>
          <linearGradient id="knob" x1="0" y1="0" x2="0" y2="1">
            <stop offset="0" stopColor="#888888" />
            <stop offset="1" stopColor="#3a3a3a" />
          </linearGradient>
          <linearGradient id="pane" x1="0" y1="0" x2="1" y2="1">
            <stop offset="0" stopColor="#8c8c8c" />
            <stop offset="1" stopColor="#5c5c5c" />
          </linearGradient>
        </defs>
      </svg>
      <TitleBar />
      <MenuBar active={menu} onChange={setMenu} />
      <Ribbon />
      <div className="flex-1 min-h-0 flex">
        <ToolRail />
        <div className="w-[540px] shrink-0 flex flex-col">
          <ProjectPanel />
          <WidgetPanel />
          <ResourcePanel />
        </div>
        <main className="flex-1 min-w-0 flex flex-col border-x-2 border-[#1f1f1f]">
          <FormEditor />
          <StylePanel />
        </main>
        <div className="w-[716px] shrink-0 flex flex-col">
          <ObjectPanel />
          <PropertyPanel />
        </div>
      </div>
      <StatusBar />
      <div className="fixed right-1.5 bottom-2.5 text-[74px] leading-[120px] text-white/70 whitespace-nowrap pointer-events-none">
        CSDN @李先静
      </div>
    </div>
  );
}

export default App;
